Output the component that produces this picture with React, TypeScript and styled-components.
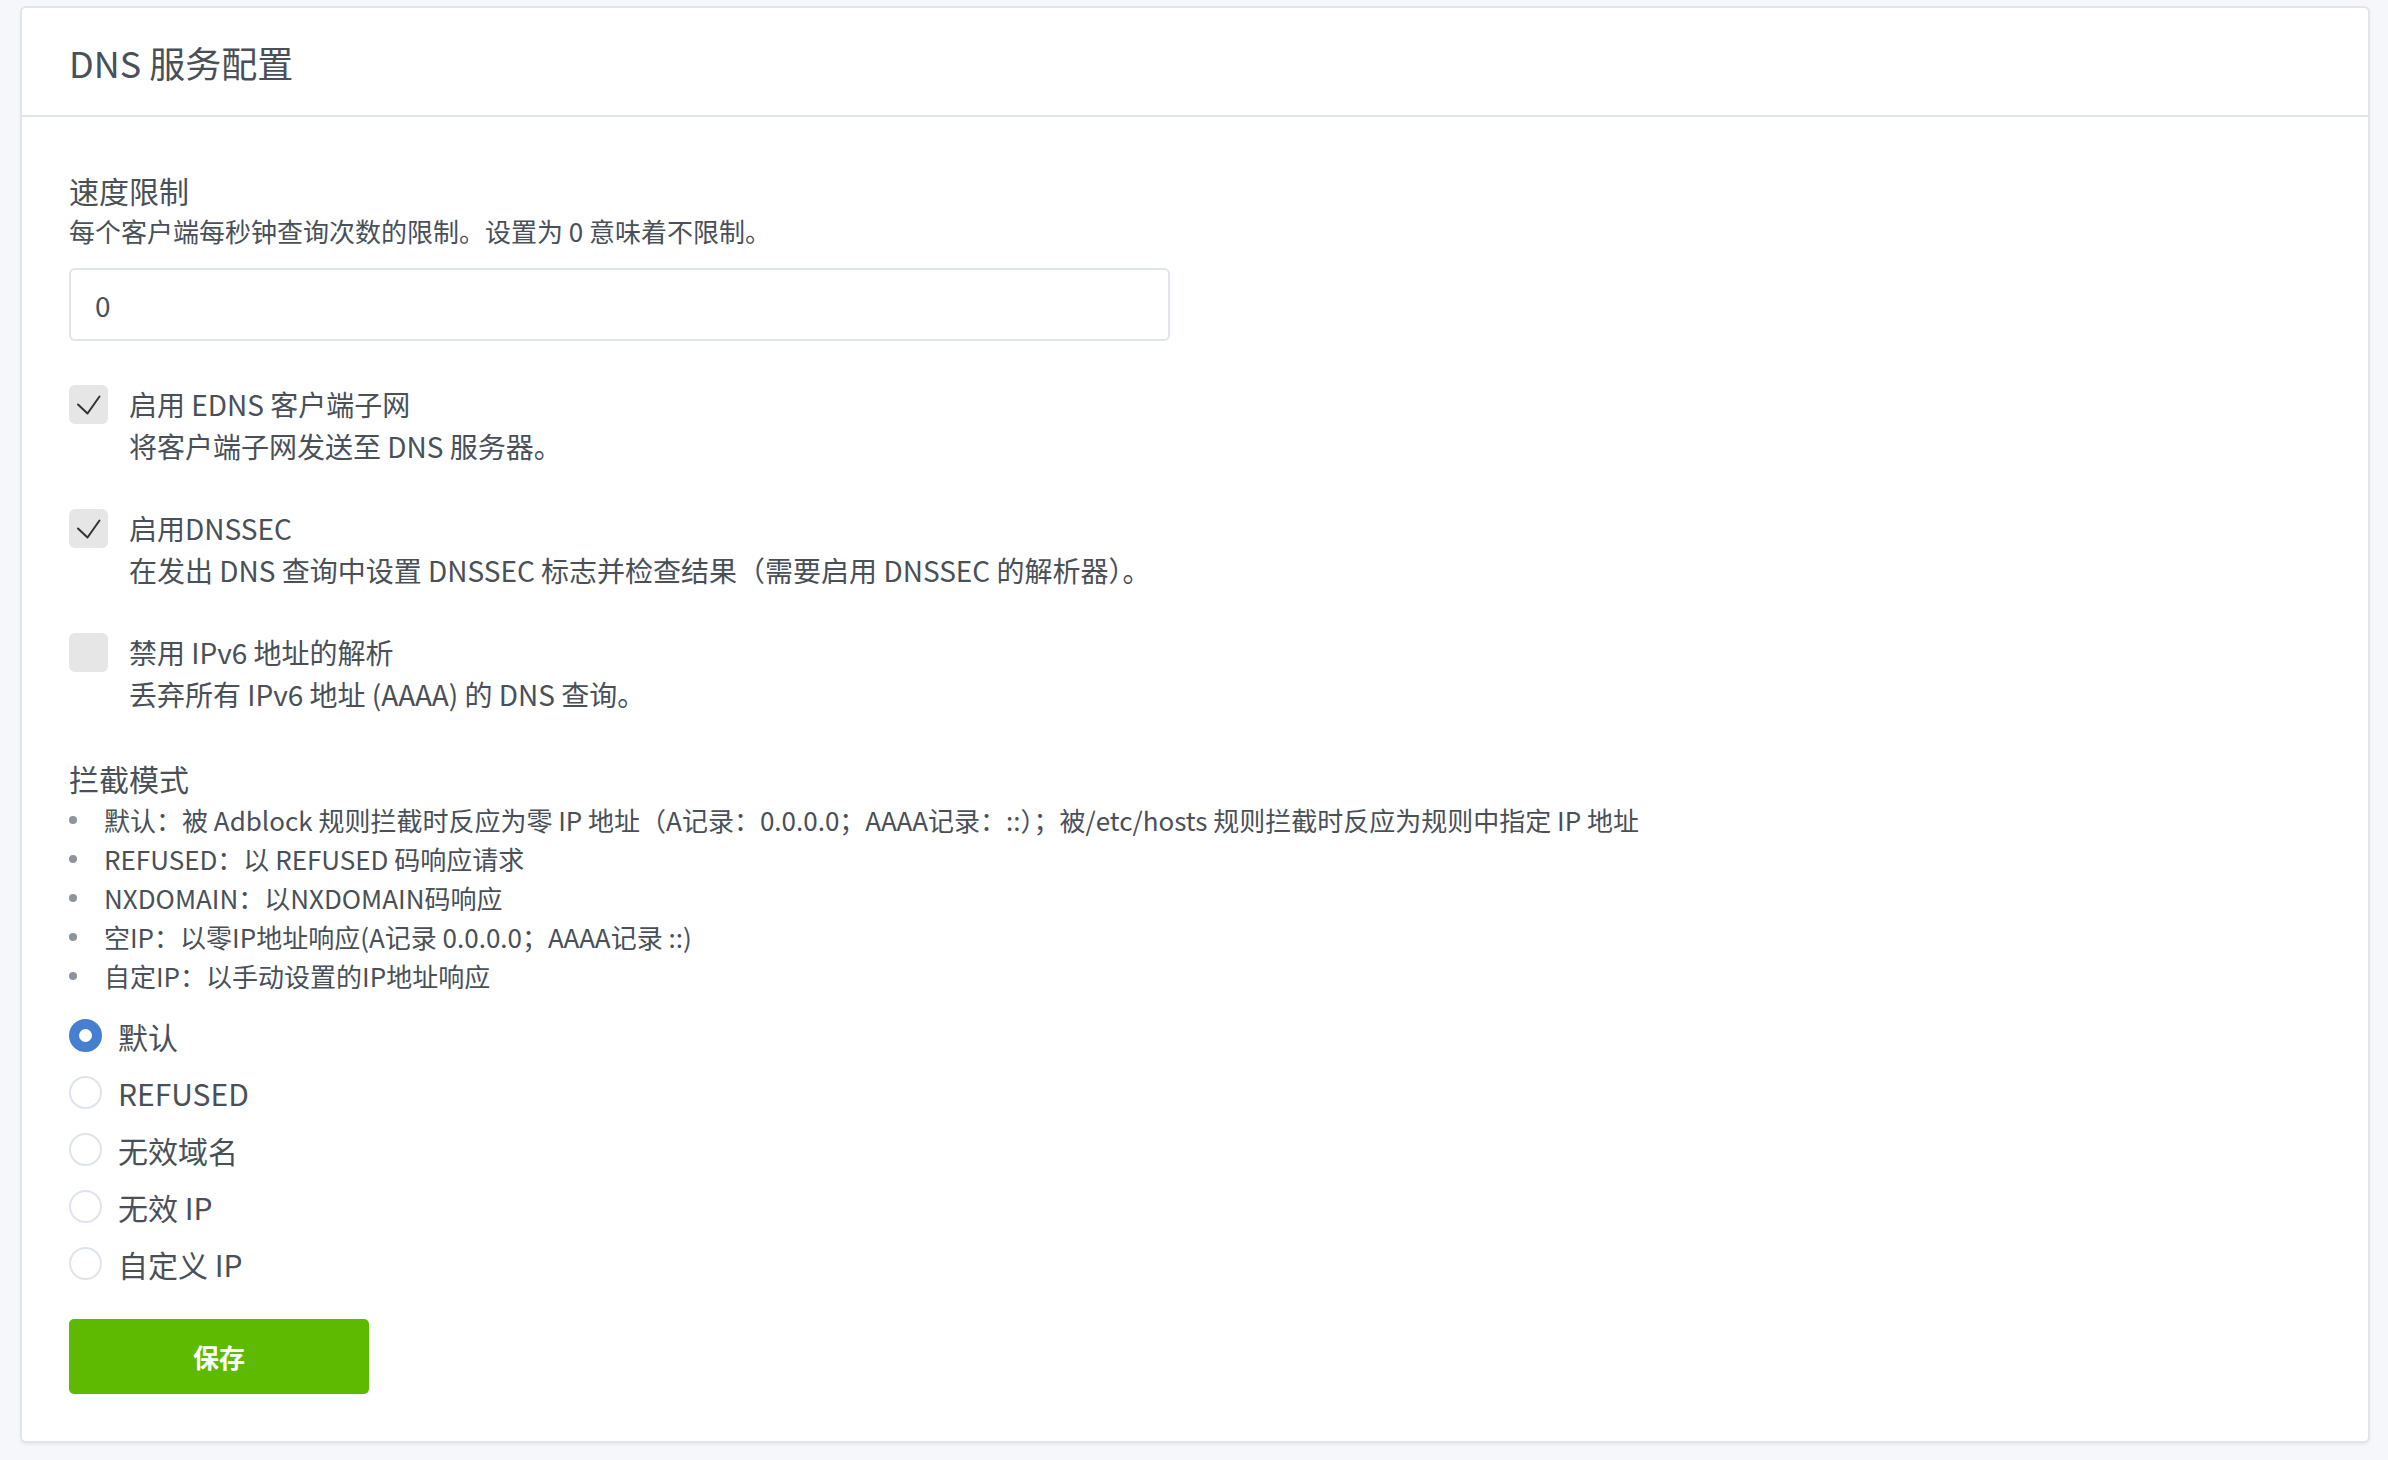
import React, { useState } from 'react'
import styled, { createGlobalStyle } from 'styled-components'

const GlobalStyle = createGlobalStyle`
  html, body {
    margin: 0;
    padding: 0;
    background: #f5f7fb;
  }
  body {
    font-family: "Noto Sans CJK SC", "Noto Sans", sans-serif;
    color: #495057;
  }
  * {
    box-sizing: border-box;
  }
`

const Page = styled.div`
  padding: 6px 18px 17px 20px;
`

const Card = styled.div`
  background: #fff;
  border: 2px solid rgba(0, 40, 100, 0.12);
  border-radius: 6px;
  box-shadow: 0 2px 3px rgba(0, 0, 0, 0.05);
`

const CardHeader = styled.div`
  height: 109px;
  padding: 0 47px;
  display: flex;
  align-items: center;
  border-bottom: 2px solid rgba(0, 40, 100, 0.12);
`

const CardTitle = styled.h3`
  margin: 0;
  font-size: 36px;
  font-weight: 400;
  color: #495057;
`

const CardBody = styled.div`
  padding: 53px 47px 47px;
`

const SectionTitle = styled.div<{ $gap?: number }>`
  font-size: 30px;
  line-height: 40px;
  color: #495057;
  margin-top: ${(p) => p.$gap ?? 0}px;
`

const Desc = styled.div`
  font-size: 26px;
  line-height: 38px;
  margin-top: 2px;
  color: #495057;
`

const Input = styled.input`
  display: block;
  width: 1101px;
  height: 73px;
  margin-top: 18px;
  padding: 0 24px;
  border: 2px solid rgba(0, 40, 100, 0.12);
  border-radius: 6px;
  font-family: inherit;
  font-size: 28px;
  color: #495057;
  outline: none;
`

const CheckRow = styled.label<{ $gap: number }>`
  display: flex;
  align-items: flex-start;
  gap: 21px;
  margin-top: ${(p) => p.$gap}px;
  cursor: pointer;
`

const Box = styled.span`
  flex: none;
  width: 39px;
  height: 39px;
  margin-top: 1px;
  border-radius: 6px;
  background: #e6e6e6;
  display: flex;
  align-items: center;
  justify-content: center;
`

const CheckText = styled.div`
  display: flex;
  flex-direction: column;
`

const CheckLabel = styled.div`
  font-size: 28px;
  line-height: 40px;
`

const CheckDesc = styled.div`
  font-size: 28px;
  line-height: 40px;
  margin-top: 2px;
`

const List = styled.ul`
  list-style: none;
  margin: 2px 0 0;
  padding: 0;
`

const Item = styled.li`
  position: relative;
  padding-left: 35px;
  font-size: 26px;
  line-height: 39px;
  &::before {
    content: '';
    position: absolute;
    left: 0;
    top: 16px;
    width: 8px;
    height: 8px;
    border-radius: 50%;
    background: #8e949c;
  }
`

const Radios = styled.div`
  margin-top: 12px;
`

const RadioRow = styled.label`
  display: flex;
  align-items: center;
  height: 57px;
  gap: 16px;
  cursor: pointer;
`

const Dot = styled.span<{ $on: boolean }>`
  flex: none;
  width: 33px;
  height: 33px;
  border-radius: 50%;
  background: #fff;
  border: ${(p) => (p.$on ? '10.5px solid #467fcf' : '2px solid #dfe3eb')};
`

const RadioText = styled.span`
  font-size: 30px;
  line-height: 40px;
`

const SaveButton = styled.button`
  display: block;
  margin-top: 27px;
  width: 300px;
  height: 75px;
  border: none;
  border-radius: 5px;
  background: #5eba00;
  color: #fff;
  font-family: inherit;
  font-size: 26px;
  font-weight: 600;
  cursor: pointer;
`

const Tick = () => (
  <svg width='39' height='39' viewBox='0 0 39 39'>
    <path d='M9 19.5l9.5 9L30.5 11.5' fill='none' stroke='#333' strokeWidth='2' strokeLinecap='round' strokeLinejoin='round' />
  </svg>
)

const checks = [
  { title: '启用 EDNS 客户端子网', desc: '将客户端子网发送至 DNS 服务器。', on: true, gap: 43 },
  { title: '启用DNSSEC', desc: '在发出 DNS 查询中设置 DNSSEC 标志并检查结果（需要启用 DNSSEC 的解析器）。', on: true, gap: 42 },
  { title: '禁用 IPv6 地址的解析', desc: '丢弃所有 IPv6 地址 (AAAA) 的 DNS 查询。', on: false, gap: 42 }
]

const modes = [
  '默认：被 Adblock 规则拦截时反应为零 IP 地址（A记录：0.0.0.0；AAAA记录：::）；被/etc/hosts 规则拦截时反应为规则中指定 IP 地址',
  'REFUSED：以 REFUSED 码响应请求',
  'NXDOMAIN：以NXDOMAIN码响应',
  '空IP：以零IP地址响应(A记录 0.0.0.0；AAAA记录 ::)',
  '自定IP：以手动设置的IP地址响应'
]

const radioOptions = ['默认', 'REFUSED', '无效域名', '无效 IP', '自定义 IP']

function App() {
  const [limit, setLimit] = useState('0')
  const [flags, setFlags] = useState(checks.map((c) => c.on))
  const [mode, setMode] = useState(0)

  const toggle = (i: number) => {
    setFlags((prev) => prev.map((v, idx) => (idx === i ? !v : v)))
  }

  return (
    <Page>
      <GlobalStyle />
      <Card>
        <CardHeader>
          <CardTitle>DNS 服务配置</CardTitle>
        </CardHeader>
        <CardBody>
          <SectionTitle>速度限制</SectionTitle>
          <Desc>每个客户端每秒钟查询次数的限制。设置为 0 意味着不限制。</Desc>
          <Input value={limit} onChange={(e) => setLimit(e.target.value)} />

          {checks.map((c, i) => (
            <CheckRow key={c.title} $gap={c.gap} onClick={() => toggle(i)}>
              <Box>{flags[i] && <Tick />}</Box>
              <CheckText>
                <CheckLabel>{c.title}</CheckLabel>
                <CheckDesc>{c.desc}</CheckDesc>
              </CheckText>
            </CheckRow>
          ))}

          <SectionTitle $gap={44}>拦截模式</SectionTitle>
          <List>
            {modes.map((m) => (
              <Item key={m}>{m}</Item>
            ))}
          </List>

          <Radios>
            {radioOptions.map((r, i) => (
              <RadioRow key={r} onClick={() => setMode(i)}>
                <Dot $on={mode === i} />
                <RadioText>{r}</RadioText>
              </RadioRow>
            ))}
          </Radios>

          <SaveButton>保存</SaveButton>
        </CardBody>
      </Card>
    </Page>
  )
}

export default App
